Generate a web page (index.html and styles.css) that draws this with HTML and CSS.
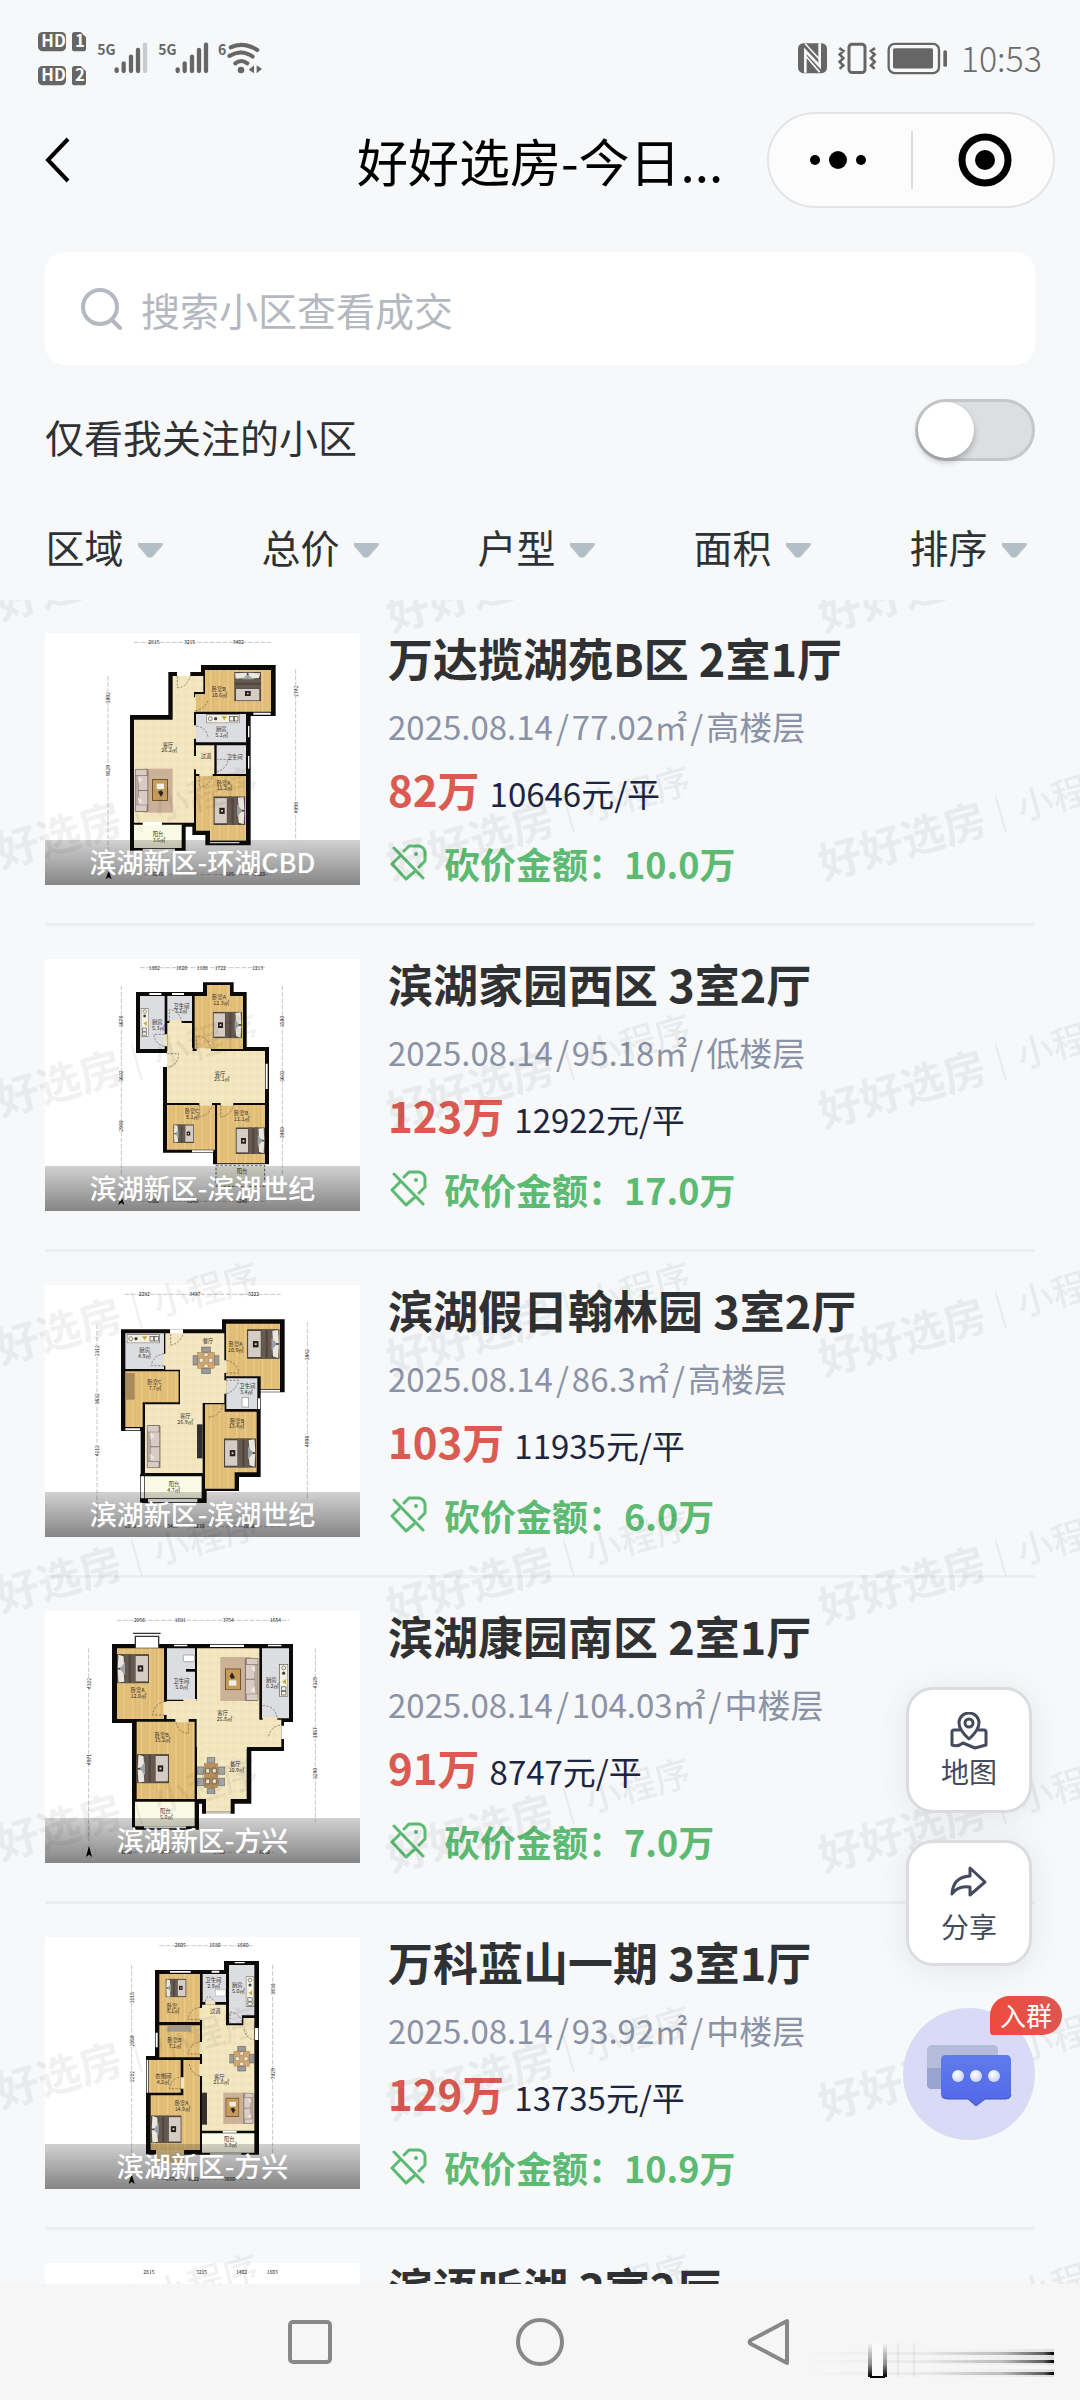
FILE: index.html
```html
<!DOCTYPE html>
<html lang="zh-CN">
<head>
<meta charset="utf-8">
<meta name="viewport" content="width=device-width, initial-scale=1">
<title>好好选房-今日成交</title>
<link rel="stylesheet" href="styles.css">
</head>
<body>
<svg class="defs" aria-hidden="true">
  <defs>
    <pattern id="wood" width="26" height="60" patternUnits="userSpaceOnUse"><rect width="26" height="60" fill="#e3c07a"/><path d="M4 0V60M16 0V60" stroke="#dab56c" stroke-width="2"/><path d="M22 0V60" stroke="#edcd8c" stroke-width="3"/></pattern>
    <pattern id="tile" width="24" height="24" patternUnits="userSpaceOnUse"><rect width="24" height="24" fill="#f4e8c3"/><path d="M12 2L22 12L12 22L2 12Z" fill="#f1e3b9"/></pattern>
    <pattern id="bath" width="12" height="12" patternUnits="userSpaceOnUse"><rect width="12" height="12" fill="#dcdee1"/><path d="M0 0H12M0 0V12" stroke="#d0d2d6"/></pattern>
    <symbol id="bed" viewBox="0 0 88 80"><rect width="88" height="80" fill="#4f463f"/><rect x="3" y="5" width="34" height="70" fill="#d5ccc3"/><path d="M38 0H50V80H38ZM56 0H68V80H56Z" fill="#665a50"/><path d="M68 4L84 2L86 38L70 36ZM68 44L86 42L84 78L70 74Z" fill="#e9e5df"/><path d="M66 22L80 40L66 58Z" fill="#9aa3a5"/><rect x="16" y="32" width="15" height="17" fill="#25201d"/><path d="M21 38H26V43H21Z" fill="#ddd"/></symbol>
    <symbol id="sofa" viewBox="0 0 42 130"><rect width="42" height="130" rx="5" fill="#87786f"/><path d="M3 3H36V20H3ZM3 110H36V127H3ZM12 22H38V64H12ZM12 67H38V108H12Z" fill="#d8ccc4"/><path d="M3 22H11V108H3Z" fill="#b9aba2"/><path d="M10 22L24 32L12 44ZM10 86L24 98L12 106Z" fill="#eee7e1"/></symbol>
    <symbol id="table" viewBox="0 0 48 66"><rect width="48" height="66" fill="#6f532f"/><rect x="3" y="3" width="42" height="60" fill="#c69a58"/><rect x="14" y="14" width="22" height="16" fill="#f4efe6"/><path d="M18 38L28 34L34 42L27 54Z" fill="#2c241e"/></symbol>
    <symbol id="dining" viewBox="0 0 80 84"><path d="M27 2H53V18H27ZM27 66H53V82H27ZM0 28H16V56H0ZM64 28H80V56H64Z" fill="#9c9a99" stroke="#666" stroke-width="2"/><rect x="15" y="18" width="50" height="48" fill="#cfa871" stroke="#7d6036"/><path d="M20 36H32V48H20ZM48 36H60V48H48ZM34 20H46V30H34ZM34 54H46V64H34Z" fill="#f3e9d7" stroke="#54452f"/></symbol>
    <symbol id="dining-long" viewBox="0 0 84 112"><path d="M31 1H53V18H31ZM31 94H53V111H31ZM0 30H20V52H0ZM64 30H84V52H64ZM0 64H20V86H0ZM64 64H84V86H64Z" fill="#a5a4a5" stroke="#666" stroke-width="2"/><rect x="22" y="20" width="40" height="72" fill="#b88f5f" stroke="#7d6036"/><path d="M26 34H38V48H26ZM46 34H58V48H46ZM26 66H38V80H26ZM46 66H58V80H46Z" fill="#f3e9d7" stroke="#54452f" stroke-width="2"/></symbol>
    <symbol id="stove" viewBox="0 0 100 28"><rect x="1" y="1" width="98" height="26" fill="#f4f1e5" stroke="#5b564d" stroke-width="2"/><circle cx="12" cy="14" r="6" fill="none" stroke="#555" stroke-width="2"/><circle cx="28" cy="14" r="5" fill="#444"/><path d="M46 7H62L54 19Z" fill="#c6a82f"/><rect x="70" y="7" width="11" height="14" fill="none" stroke="#444" stroke-width="2"/><rect x="84" y="7" width="11" height="14" fill="none" stroke="#444" stroke-width="2"/></symbol>
    <symbol id="tag" viewBox="0 0 38 38"><path d="M14 7L19 2H29Q34 3 35 8V17L29 23M10 12L2 20L16 35L24 28M4 4L33 34" fill="none" stroke="currentColor" stroke-width="3" stroke-linejoin="round" stroke-linecap="round"/><circle cx="26" cy="10" r="2" fill="currentColor"/></symbol>
  </defs>
</svg>

<div class="app">
  <header class="top">
    <div class="status">
      <svg class="status-left" viewBox="0 0 720 240" role="img" aria-label="信号">
        <g fill="#666">
          <rect x="24" y="36" width="84" height="58" rx="14"/><path d="M134 36H152L168 52V86Q168 94 160 94H134Q126 94 126 86V44Q126 36 134 36Z"/>
          <rect x="24" y="138" width="84" height="58" rx="14"/><path d="M134 138H152L168 154V188Q168 196 160 196H134Q126 196 126 188V146Q126 138 134 138Z"/>
          <g class="bars"><path d="M260 148V153M281 130V153M303 110V153M324 90V153M443 148V153M464 130V153M486 110V153M507 90V153M528 74V153"/><path d="M345 74V153" opacity=".3"/></g>
          <g fill="none" stroke="#666" stroke-width="12" stroke-linecap="round"><path d="M602 82Q640 64 682 90M598 108Q635 86 668 110M616 130Q634 116 652 130"/></g>
          <circle cx="633" cy="150" r="10"/><path d="M672 136V160L656 149ZM680 136L696 147L680 160Z"/>
        </g>
        <g class="hd"><text x="34" y="82">HD</text><text x="135" y="82">1</text><text x="34" y="184">HD</text><text x="135" y="184">2</text></g>
        <g class="net"><text x="202" y="106">5G</text><text x="385" y="106">5G</text><text x="564" y="104">6</text></g>
      </svg>
      <div class="status-right">
        <svg class="status-icons" viewBox="45 30 456 110" role="img" aria-label="NFC 振动 电池">
          <rect x="48" y="39" width="87" height="90" rx="16" fill="#666"/><path d="M70 128V62L113 108V39" fill="none" stroke="#f6f7fa" stroke-width="8"/><path d="M69 40L113 88M70 76L113 126" stroke="#f6f7fa" stroke-width="5"/>
          <g fill="none" stroke="#666"><rect x="201" y="42" width="48" height="85" rx="9" stroke-width="9"/><path d="M172 54L184 62L173 73L184 84L173 95L184 106L173 116M279 54L267 62L278 73L267 84L278 95L267 106L278 116" stroke-width="8"/><rect x="320" y="41" width="151" height="88" rx="18" stroke-width="7"/></g>
          <rect x="333" y="54" width="120" height="61" rx="5" fill="#666"/><rect x="484" y="60" width="11" height="50" rx="5" fill="#666"/>
        </svg>
        <time class="clock">10:53</time>
      </div>
    </div>
    <nav class="titlebar">
      <button class="back" aria-label="返回"><svg viewBox="0 0 26 48"><path d="M23 3L3 24L23 45" fill="none" stroke="#000" stroke-width="4"/></svg></button>
      <h1 class="page-title">好好选房-今日...</h1>
      <div class="capsule">
        <button aria-label="更多"><svg viewBox="0 0 58 54"><circle cx="6" cy="27" r="5"/><circle cx="29" cy="27" r="9"/><circle cx="52" cy="27" r="5"/></svg></button>
        <button aria-label="关闭"><svg viewBox="0 0 54 54"><circle cx="27" cy="27" r="23" fill="none" stroke="#000" stroke-width="7"/><circle cx="27" cy="27" r="10"/></svg></button>
      </div>
    </nav>
    <label class="search">
      <svg viewBox="0 0 42 42"><circle cx="19" cy="19" r="17" fill="none" stroke="#b4b8c0" stroke-width="4"/><path d="M31 32L39 40" stroke="#b4b8c0" stroke-width="4" stroke-linecap="round"/></svg>
      <input type="search" placeholder="搜索小区查看成交" aria-label="搜索小区">
    </label>
    <label class="follow"><span>仅看我关注的小区</span><input class="switch" type="checkbox" role="switch"></label>
    <div class="filters">
      <label class="filter"><select aria-label="区域"><option>区域</option></select><i></i></label>
      <label class="filter"><select aria-label="总价"><option>总价</option></select><i></i></label>
      <label class="filter"><select aria-label="户型"><option>户型</option></select><i></i></label>
      <label class="filter"><select aria-label="面积"><option>面积</option></select><i></i></label>
      <label class="filter"><select aria-label="排序"><option>排序</option></select><i></i></label>
    </div>
  </header>

  <main class="content">
    <ul class="list">
      <li class="item">
        <figure class="thumb">
          <svg class="plan" viewBox="45 39 945 756">
            <path d="M300 285H415V156H513V135H737V288H662V676H526V645H487V620H467V692H300Z" fill="#0c0a09"/>
            <path d="M428 168H520V216H492V608H312V299H428ZM498 376H553V462H498Z" fill="url(#tile)"/>
            <path d="M525 150H723V275H495V222H525ZM498 468H648V662H540V632H498Z" fill="url(#wood)"/>
            <path d="M498 282H648V367H498ZM560 376H648V462H560Z" fill="url(#bath)"/>
            <path d="M312 614H455V684H312Z" fill="#fafbe6"/>
            <path d="M441 154H481V168H441ZM670 278H722V284H670ZM654 318H658V352H654ZM654 408H658V446H654ZM540 666H628V670H540ZM338 606H396V616H338ZM338 686H435V694H338Z" fill="#fff"/>
            <path d="M491 232H498V275H491ZM491 316H498V356H491ZM491 408H498V448H491ZM508 460H548V468H508Z" fill="#f3e5bb"/>
            <use href="#bed" x="609" y="152" width="88" height="96" transform="rotate(-90 653 200)"/>
            <use href="#bed" x="549" y="529" width="98" height="86"/>
            <rect x="340" y="446" width="88" height="132" fill="#cbb198"/><use href="#sofa" x="314" y="446" width="42" height="130"/><use href="#table" x="366" y="477" width="48" height="66"/>
            <use href="#stove" x="529" y="282" width="100" height="28"/>
            <path class="door" d="M442 168V203Q472 202 481 168M495 272Q526 266 533 242M498 318Q528 322 534 350M508 468V502Q540 498 546 468M558 418H590M560 456Q590 446 594 420"/>
            <path class="dim" d="M312 67H722M234 168V740M797 148V662M340 764H722"/><path d="M236 752L245 778L236 772L227 778Z"/>
            <g class="names"><text x="398" y="380">客厅</text><text x="394" y="397">26.2㎡</text><text x="545" y="214">卧室B</text><text x="545" y="231">10.6㎡</text><text x="558" y="334">厨房</text><text x="556" y="351">5.1㎡</text><text x="512" y="414">过道</text><text x="590" y="416">卫生间</text><text x="560" y="494">卧室A</text><text x="560" y="511">11.2㎡</text><text x="368" y="648">阳台</text><text x="368" y="665">3.6㎡</text></g>
            <g class="dims"><text x="355" y="72">2815</text><text x="462" y="72">3215</text><text x="608" y="72">3402</text><text x="366" y="768">3245</text><text x="578" y="768">3195</text><text x="672" y="768">1120</text><text transform="translate(240 250) rotate(-90)">3892</text><text transform="translate(240 468) rotate(-90)">9529</text><text transform="translate(803 230) rotate(-90)">2742</text><text transform="translate(803 580) rotate(-90)">4090</text></g>
          </svg>
          <figcaption>滨湖新区-环湖CBD</figcaption>
        </figure>
        <div class="info">
          <h2>万达揽湖苑B区 2室1厅</h2>
          <p class="meta"><span>2025.08.14</span><span>/</span><span>77.02㎡</span><span>/</span><span>高楼层</span></p>
          <p class="price"><strong>82万</strong><span>10646元/平</span></p>
          <p class="cut"><svg><use href="#tag"/></svg>砍价金额：10.0万</p>
        </div>
      </li>

      <li class="item">
        <figure class="thumb">
          <svg class="plan" viewBox="45 42 945 756">
            <path d="M318 141H519V112H611V141H650V306H717V658H549V623H399V366H411V324H318Z" fill="#0c0a09"/>
            <path d="M412 234H486V318H705V474H411V318H412Z" fill="url(#tile)"/>
            <path d="M531 120H600V153H639V312H494V153H531ZM411 480H555V614H411ZM561 480H705V655H561Z" fill="url(#wood)"/>
            <path d="M330 153H404V312H330ZM412 153H486V228H412Z" fill="url(#bath)"/>
            <path d="M558 661H704V724H558Z" fill="#f2f4e5" stroke="#666" stroke-width="3" stroke-dasharray="8 5"/>
            <path d="M358 144H394V150H358ZM426 144H462V150H426ZM399 327H411V366H399ZM707 356H713V432H707ZM486 616H550V622H486Z" fill="#fff"/>
            <path d="M402 268H412V304H402ZM418 226H455V236H418ZM500 310H543V320H500ZM453 308H488V320H453ZM508 472H546V482H508ZM572 472H610V482H572Z" fill="#f3e5bb"/>
            <use href="#bed" x="548" y="200" width="88" height="80"/><use href="#bed" x="616" y="547" width="90" height="80"/><use href="#bed" x="414" y="538" width="94" height="56" transform="rotate(180 461 566)"/>
            <use href="#stove" x="300" y="220" width="88" height="24" transform="rotate(90 344 232)"/>
            <path class="door" d="M411 326H446Q444 360 415 366M404 268H372Q374 298 404 304M418 230V194Q448 196 455 230M500 312V272Q536 276 543 312M508 480V516Q540 510 546 480M572 480V516Q604 510 610 480"/>
            <path class="dim" d="M330 68H706M274 122V740M757 122V690M330 769H706"/><path d="M274 752L283 780L274 773L265 780Z"/>
            <g class="names"><text x="366" y="238">厨房</text><text x="366" y="255">5.3㎡</text><text x="430" y="188">卫生间</text><text x="434" y="205">3.2㎡</text><text x="546" y="162">卧室A</text><text x="550" y="179">12.3㎡</text><text x="554" y="392">客厅</text><text x="552" y="409">25.1㎡</text><text x="464" y="505">卧室C</text><text x="468" y="522">8.1㎡</text><text x="612" y="510">卧室B</text><text x="612" y="527">11.1㎡</text><text x="620" y="684">阳台</text></g>
            <g class="dims"><text x="356" y="74">1802</text><text x="438" y="74">1620</text><text x="500" y="74">1108</text><text x="554" y="74">1722</text><text x="666" y="74">1213</text><text x="354" y="774">1802</text><text x="470" y="774">3240</text><text x="618" y="774">3240</text><text transform="translate(280 246) rotate(-90)">3678</text><text transform="translate(280 410) rotate(-90)">3602</text><text transform="translate(280 560) rotate(-90)">2980</text><text transform="translate(763 246) rotate(-90)">3580</text><text transform="translate(763 410) rotate(-90)">3602</text><text transform="translate(763 580) rotate(-90)">3980</text></g>
          </svg>
          <figcaption>滨湖新区-滨湖世纪</figcaption>
        </figure>
        <div class="info">
          <h2>滨湖家园西区 3室2厅</h2>
          <p class="meta"><span>2025.08.14</span><span>/</span><span>95.18㎡</span><span>/</span><span>低楼层</span></p>
          <p class="price"><strong>123万</strong><span>12922元/平</span></p>
          <p class="cut"><svg><use href="#tag"/></svg>砍价金额：17.0万</p>
        </div>
      </li>

      <li class="item">
        <figure class="thumb">
          <svg class="plan" viewBox="45 44 945 756">
            <path d="M273 177H576V147H764V366H692V620H627V662H530V698H330V612H332V482H273Z" fill="#0c0a09"/>
            <path d="M406 189H583V398H518V608H345V402H450V298H406Z" fill="url(#tile)"/>
            <path d="M588 160H750V356H692V318H588ZM286 303H446V396H338V470H286ZM525 402H584V424H680V606H614V655H525Z" fill="url(#wood)"/>
            <path d="M286 189H402V296H286ZM589 324H682V416H589Z" fill="url(#bath)"/>
            <path d="M345 618H515V684H345Z" fill="#fafbe6"/>
            <path d="M420 177H459V190H420ZM684 384H690V416H684ZM286 474H330V480H286ZM692 358H750V364H692ZM354 686H502V696H354ZM332 618H343V684H332Z" fill="#fff"/>
            <path d="M400 250H408V286H400ZM581 270H590V308H581ZM581 330H590V370H581Z" fill="#f3e5bb"/>
            <use href="#bed" x="651" y="176" width="98" height="90"/><use href="#bed" x="582" y="503" width="96" height="90"/>
            <use href="#dining" x="488" y="228" width="80" height="84"/><use href="#sofa" x="350" y="464" width="42" height="130"/><rect x="501" y="462" width="17" height="102" fill="#35302d"/>
            <use href="#stove" x="290" y="191" width="100" height="28"/><rect x="288" y="308" width="26" height="80" fill="#a98a5a"/><rect x="636" y="382" width="20" height="28" fill="#fff" stroke="#888" stroke-width="2"/>
            <path class="door" d="M422 190V224Q452 220 459 190M402 286H364Q368 256 402 250M588 308H626Q622 276 588 270M589 370Q618 362 626 330H589M536 440Q568 440 578 404"/>
            <path class="dim" d="M284 72H752M201 162V770M832 156V690M284 769H752"/>
            <g class="names"><text x="328" y="245">厨房</text><text x="324" y="262">4.9㎡</text><text x="518" y="218">餐厅</text><text x="596" y="227">卧室A</text><text x="594" y="244">10.9㎡</text><text x="352" y="341">卧室C</text><text x="356" y="358">7.7㎡</text><text x="628" y="353">卫生间</text><text x="630" y="370">3.4㎡</text><text x="450" y="443">客厅</text><text x="442" y="460">26.9㎡</text><text x="600" y="457">卧室B</text><text x="596" y="474">13.4㎡</text><text x="416" y="648">阳台</text><text x="412" y="665">4.7㎡</text></g>
            <g class="dims"><text x="326" y="78">2292</text><text x="478" y="78">3487</text><text x="654" y="78">3222</text><text x="284" y="774">1140</text><text x="412" y="774">3487</text><text x="490" y="774">1210</text><text x="640" y="774">1940</text><text transform="translate(207 258) rotate(-90)">2312</text><text transform="translate(207 402) rotate(-90)">3632</text><text transform="translate(207 558) rotate(-90)">4212</text><text transform="translate(838 270) rotate(-90)">3842</text><text transform="translate(838 530) rotate(-90)">4998</text></g>
          </svg>
          <figcaption>滨湖新区-滨湖世纪</figcaption>
        </figure>
        <div class="info">
          <h2>滨湖假日翰林园 3室2厅</h2>
          <p class="meta"><span>2025.08.14</span><span>/</span><span>86.3㎡</span><span>/</span><span>高楼层</span></p>
          <p class="price"><strong>103万</strong><span>11935元/平</span></p>
          <p class="cut"><svg><use href="#tag"/></svg>砍价金额：6.0万</p>
        </div>
      </li>

      <li class="item">
        <figure class="thumb">
          <svg class="plan" viewBox="45 48 945 756">
            <path d="M246 147H789V381H762V468H664V626H614V656H516V626H507V704H306V384H246Z" fill="#0c0a09"/>
            <path d="M501 160H688V374H754V456H650V612H602V650H528V612H501V456H500V372H410V318H501Z" fill="url(#tile)"/>
            <path d="M261 160H402V372H261ZM320 380H494V612H320Z" fill="url(#wood)"/>
            <path d="M411 160H495V314H411ZM696 160H777V370H696Z" fill="url(#bath)"/>
            <path d="M315 620H494V694H315Z" fill="#fafbe6"/>
            <path d="M432 149H472V154H432ZM540 149H642V156H540ZM714 149H754V154H714ZM754 392H762V432H754ZM342 694H468V700H342ZM528 652H602V656H528Z" fill="#fff"/>
            <path d="M316 158V124H386V158M309 115H392" fill="#fff" stroke="#333" stroke-width="4"/>
            <path d="M468 222H496V230H468Z"/><path d="M400 320H412V360H400ZM436 370H476V382H436ZM698 366H742V378H698ZM518 452H650V462H518ZM460 312H500V318H460Z" fill="#f3e5bb"/>
            <use href="#bed" x="261" y="176" width="96" height="90" transform="rotate(180 309 221)"/><use href="#bed" x="321" y="476" width="96" height="90" transform="rotate(180 369 521)"/>
            <rect x="571" y="186" width="90" height="132" fill="#cbb198"/><use href="#sofa" x="644" y="188" width="42" height="130" transform="rotate(180 665 253)"/><use href="#table" x="585" y="220" width="48" height="66" transform="rotate(180 609 253)"/>
            <use href="#dining-long" x="501" y="486" width="84" height="112"/><use href="#stove" x="712" y="242" width="98" height="28" transform="rotate(90 761 256)"/><rect x="460" y="180" width="34" height="20" rx="4" fill="#fff" stroke="#888" stroke-width="2"/>
            <path class="door" d="M404 360H368Q372 326 404 320M438 382Q444 412 476 416V382M698 332Q736 332 742 370M716 424Q722 394 752 390"/>
            <path class="dim" d="M260 76H778M176 160V740M856 160V680M270 772H730"/><circle cx="177" cy="770" r="20" fill="none" stroke="#888" stroke-dasharray="3 4"/><path d="M177 752L186 786L177 779L168 786Z"/>
            <g class="names"><text x="302" y="291">卧室A</text><text x="302" y="308">12.0㎡</text><text x="430" y="265">卫生间</text><text x="436" y="282">5.0㎡</text><text x="562" y="361">客厅</text><text x="560" y="378">25.8㎡</text><text x="708" y="262">厨房</text><text x="708" y="279">6.2㎡</text><text x="374" y="425">卧室B</text><text x="374" y="442">15.2㎡</text><text x="600" y="513">餐厅</text><text x="596" y="530">10.9㎡</text><text x="390" y="654">阳台</text><text x="390" y="671">5.0㎡</text></g>
            <g class="dims"><text x="312" y="82">2956</text><text x="434" y="82">1691</text><text x="578" y="82">3754</text><text x="720" y="82">1654</text><text x="272" y="777">1230</text><text x="390" y="777">3477</text><text x="550" y="777">1460</text><text x="686" y="777">1952</text><text transform="translate(182 282) rotate(-90)">4322</text><text transform="translate(182 510) rotate(-90)">4971</text><text transform="translate(862 280) rotate(-90)">4329</text><text transform="translate(862 430) rotate(-90)">1857</text><text transform="translate(862 552) rotate(-90)">3290</text></g>
          </svg>
          <figcaption>滨湖新区-方兴</figcaption>
        </figure>
        <div class="info">
          <h2>滨湖康园南区 2室1厅</h2>
          <p class="meta"><span>2025.08.14</span><span>/</span><span>104.03㎡</span><span>/</span><span>中楼层</span></p>
          <p class="price"><strong>91万</strong><span>8747元/平</span></p>
          <p class="cut"><svg><use href="#tag"/></svg>砍价金额：7.0万</p>
        </div>
      </li>

      <li class="item">
        <figure class="thumb">
          <svg class="plan" viewBox="45 51 945 756">
            <path d="M375 150H582V123H687V704H348V408H375Z" fill="#0c0a09"/>
            <path d="M516 254H588V316H640V294H673V632H516Z" fill="url(#tile)"/>
            <path d="M388 162H510V306H388ZM388 316H510V412H388ZM357 420H452V518H357ZM460 420H510V690H362V526H460Z" fill="url(#wood)"/>
            <path d="M518 162H588V246H518ZM597 135H673V286H636V310H597Z" fill="url(#bath)"/>
            <path d="M516 640H673V698H516Z" fill="#fafbe6"/><path d="M378 690H462V728H378Z" fill="#e8cd92"/>
            <path d="M420 153H482V158H420ZM545 152H568V158H545ZM614 126H644V130H614ZM377 338H383V382H377ZM675 324H685V360H675ZM350 420H355V518H350ZM540 700H634V704H540ZM578 632H620V638H578Z" fill="#fff"/>
            <path d="M508 264H518V300H508ZM508 366H518V402H508ZM508 432H518V468H508ZM452 472H462V506H452ZM526 244H556V254H526Z" fill="#f3e5bb"/>
            <use href="#bed" x="390" y="176" width="96" height="56" transform="rotate(180 438 204)"/><use href="#bed" x="363" y="586" width="92" height="84" transform="rotate(180 409 628)"/>
            <use href="#dining" x="598" y="376" width="74" height="80"/><rect x="580" y="518" width="76" height="94" fill="#cbb198"/><use href="#sofa" x="637" y="518" width="36" height="94" transform="rotate(180 655 565)"/><use href="#table" x="586" y="532" width="42" height="60"/>
            <rect x="516" y="518" width="15" height="96" fill="#35302d"/><rect x="412" y="317" width="72" height="18" fill="#a19988"/><use href="#stove" x="614" y="202" width="92" height="26" transform="rotate(90 660 215)"/><rect x="556" y="210" width="30" height="18" fill="#fff" stroke="#888"/>
            <path class="door" d="M512 298H474Q478 266 510 262M510 402H474Q480 370 510 366M510 468Q482 462 478 432M454 506H418Q422 476 454 470M526 246Q530 214 556 246M600 310V276Q630 280 636 308M676 360Q648 358 642 326"/>
            <path class="dim" d="M388 77H674M305 134V740M728 134V720M378 778H674"/><path d="M305 762L314 792L305 785L296 792Z"/>
            <g class="names"><text x="410" y="263">卧室</text><text x="410" y="280">8.1㎡</text><text x="526" y="187">卫生间</text><text x="532" y="204">2.9㎡</text><text x="606" y="202">厨房</text><text x="606" y="219">5.0㎡</text><text x="540" y="278">过道</text><text x="412" y="366">卧室B</text><text x="416" y="383">7.1㎡</text><text x="376" y="475">衣帽间</text><text x="380" y="492">4.2㎡</text><text x="552" y="476">客厅</text><text x="550" y="493">21.6㎡</text><text x="434" y="555">卧室A</text><text x="434" y="572">14.9㎡</text><text x="582" y="664">阳台</text><text x="582" y="681">3.3㎡</text></g>
            <g class="dims"><text x="434" y="82">2605</text><text x="538" y="82">1580</text><text x="622" y="82">1660</text><text x="408" y="782">1770</text><text x="474" y="782">1022</text><text x="582" y="782">3080</text><text transform="translate(311 250) rotate(-90)">3115</text><text transform="translate(311 380) rotate(-90)">2050</text><text transform="translate(311 486) rotate(-90)">2212</text><text transform="translate(734 224) rotate(-90)">3830</text><text transform="translate(734 478) rotate(-90)">7029</text></g>
          </svg>
          <figcaption>滨湖新区-方兴</figcaption>
        </figure>
        <div class="info">
          <h2>万科蓝山一期 3室1厅</h2>
          <p class="meta"><span>2025.08.14</span><span>/</span><span>93.92㎡</span><span>/</span><span>中楼层</span></p>
          <p class="price"><strong>129万</strong><span>13735元/平</span></p>
          <p class="cut"><svg><use href="#tag"/></svg>砍价金额：10.9万</p>
        </div>
      </li>

      <li class="item">
        <figure class="thumb">
          <svg class="plan" viewBox="45 61 945 756"><g class="dims"><text x="340" y="94">2815</text><text x="498" y="94">3215</text><text x="618" y="94">1402</text><text x="710" y="94">1803</text></g></svg>
        </figure>
        <div class="info"><h2>滨语听湖 3室2厅</h2></div>
      </li>
    </ul>

    <svg class="watermark" aria-hidden="true">
      <defs>
        <pattern id="wm" x="370" y="88" width="432" height="248" patternUnits="userSpaceOnUse">
          <g transform="translate(22 192) rotate(-16)"><text class="wm-brand" x="0" y="0">好好选房</text><path d="M188 -34V4" stroke="#000" stroke-width="2"/><text class="wm-sub" x="206" y="-2">小程序</text></g>
        </pattern>
      </defs>
      <rect width="100%" height="100%" fill="url(#wm)"/>
    </svg>

    <aside class="floats">
      <button class="float map"><svg viewBox="0 0 38 38"><g fill="none" stroke="#434b5c" stroke-width="3" stroke-linejoin="round" stroke-linecap="round"><path d="M19 27Q9 18 9 11A10 10 0 0 1 29 11Q29 18 19 27Z"/><circle cx="19" cy="11" r="4"/><path d="M9 18H4Q2 18 2 20V33Q8 35 13 31L25 36L36 33V20Q36 18 34 18H29"/></g></svg>地图</button>
      <button class="float"><svg viewBox="0 0 38 38"><path d="M20 5L35 19L20 32V24Q8 22 2 31Q3 14 20 13Z" fill="none" stroke="#434b5c" stroke-width="3" stroke-linejoin="round"/></svg>分享</button>
      <button class="chat">
        <svg viewBox="0 0 132 132" aria-hidden="true">
          <defs><linearGradient id="cb" x1="0" y1="0" x2="0" y2="1"><stop offset="0" stop-color="#5f7bea"/><stop offset="1" stop-color="#5368ea"/></linearGradient><radialGradient id="cd" cx=".4" cy=".35" r=".7"><stop offset="0" stop-color="#fff"/><stop offset="1" stop-color="#c9cff0"/></radialGradient></defs>
          <rect x="24" y="37" width="71" height="44" rx="5" fill="#b4bcd9"/><path d="M24 60H38V81H28Q24 81 24 76Z" fill="#98a3cf"/>
          <path d="M43 47H103Q108 47 108 52V86Q108 91 103 91H82L73 98L65 91H43Q38 91 38 86V52Q38 47 43 47Z" fill="url(#cb)"/><path d="M40 89Q42 91 45 91H65L73 98L82 91H103Q107 91 108 87" fill="none" stroke="#3f50c8"/>
          <circle cx="55" cy="68" r="6" fill="url(#cd)"/><circle cx="73" cy="68" r="6" fill="url(#cd)"/><circle cx="91" cy="68" r="6" fill="url(#cd)"/>
        </svg>
        <span class="badge">入群</span>
      </button>
    </aside>
  </main>

  <footer class="sysnav">
    <button aria-label="最近任务"><svg viewBox="0 0 48 48"><rect x="4" y="4" width="40" height="40" rx="3"/></svg></button>
    <button aria-label="主页"><svg viewBox="0 0 48 48"><circle cx="24" cy="24" r="22"/></svg></button>
    <button aria-label="返回上一级"><svg viewBox="0 0 48 48"><path d="M41 3V45L5 26Q2 24 5 22Z"/></svg></button>
    <svg class="smear" viewBox="0 0 256 40" aria-hidden="true">
      <defs><linearGradient id="sh"><stop offset="0" stop-color="#000" stop-opacity="0"/><stop offset=".5" stop-color="#000" stop-opacity=".05"/><stop offset=".8" stop-color="#000" stop-opacity=".22"/><stop offset=".96" stop-color="#000" stop-opacity=".6"/><stop offset="1" stop-color="#000"/></linearGradient><linearGradient id="sv" x1="0" y1="0" x2="0" y2="1"><stop offset="0" stop-color="#000" stop-opacity="0"/><stop offset=".6" stop-color="#000" stop-opacity=".4"/><stop offset="1" stop-color="#000"/></linearGradient></defs>
      <rect x="0" y="10" width="254" height="8" fill="url(#sh)" opacity=".12"/><rect x="0" y="18" width="254" height="8" fill="url(#sh)" opacity=".12"/><rect x="0" y="30" width="254" height="8" fill="url(#sh)" opacity=".12"/>
      <rect x="0" y="13" width="254" height="3" fill="url(#sh)"/><rect x="0" y="21" width="254" height="3" fill="url(#sh)"/><rect x="0" y="33" width="254" height="3" fill="url(#sh)"/>
      <rect x="68" y="4" width="4" height="34" fill="url(#sv)"/><rect x="83" y="4" width="4" height="34" fill="url(#sv)"/><rect x="72" y="4" width="11" height="33" fill="#fafafa"/><path d="M70 38H85" stroke="#000" stroke-width="2"/>
      <path d="M98 4V38M114 4V38" stroke="#000" stroke-opacity=".05" stroke-width="2"/>
    </svg>
  </footer>
</div>
</body>
</html>
```
FILE: styles.css
```css
* { box-sizing: border-box; margin: 0; padding: 0; }
body { background: #f7f8fa; color: #2f3133; font-family: "Noto Sans CJK SC", "Noto Sans", sans-serif; }
button, input, select { font: inherit; color: inherit; border: 0; background: none; outline: none; }
svg { display: block; flex: none; }
.defs { position: absolute; width: 0; height: 0; }

.app { display: flex; flex-direction: column; height: 100vh; overflow: hidden; }
.top { flex: none; height: 600px; }

/* system status bar */
.status { display: flex; justify-content: space-between; align-items: flex-start; height: 112px; padding: 20px 38px 0 30px; }
.status-left { width: 240px; height: 80px; }
.bars { fill: none; stroke: #666; stroke-width: 13px; stroke-linecap: round; }
.hd { fill: #fff; font-size: 50px; font-weight: 700; font-family: "Liberation Sans Narrow", "Noto Sans CJK SC", sans-serif; }
.net { fill: #666; font-size: 42px; font-weight: 700; font-family: "Liberation Sans Narrow", "Noto Sans CJK SC", sans-serif; }
.status-right { display: flex; align-items: center; gap: 12px; height: 76px; }
.status-icons { width: 152px; height: 37px; }
.clock { font-size: 34px; line-height: 40px; color: #6c6c6c; font-weight: 300; }

/* title bar */
.titlebar { display: grid; grid-template-columns: 288px 1fr 288px; align-items: center; height: 96px; padding: 0 25px; }
.back { width: 66px; height: 66px; padding: 9px 20px; }
.back svg { width: 26px; height: 48px; }
.page-title { font-size: 51px; font-weight: 400; line-height: 60px; color: #000; text-align: center; white-space: nowrap; }
.capsule { display: grid; grid-template-columns: 1fr 1fr; align-items: center; height: 96px; border: 2px solid #e3e4e6; border-radius: 48px; background: #fcfcfc; }
.capsule button { display: flex; justify-content: center; align-items: center; height: 58px; padding-right: 4px; }
.capsule button + button { padding: 0 0 0 4px; border-left: 2px solid #dcdcdc; }
.capsule svg { width: 58px; height: 54px; }

.search { display: flex; align-items: center; gap: 18px; height: 113px; margin: 44px 45px 0; padding: 0 36px; border-radius: 20px; background: #fff; }
.search svg { width: 42px; height: 42px; }
.search input { flex: 1; min-width: 0; font-size: 39px; line-height: 56px; appearance: none; }
.search input::placeholder { color: #b4b8c0; opacity: 1; }

.follow { display: flex; justify-content: space-between; align-items: center; height: 62px; margin: 34px 45px 0; font-size: 39px; line-height: 56px; }
.follow span { padding-top: 12px; }
.switch { position: relative; width: 120px; height: 62px; border: 3px solid #c6c7c9; border-radius: 31px; background: #dddee2; appearance: none; }
.switch::before { content: ""; display: block; width: 56px; height: 56px; border-radius: 50%; background: #fff; box-shadow: 0 4px 6px rgba(0, 0, 0, .25); }
.switch:checked { background: #5bb873; }
.switch:checked::before { margin-left: auto; }

.filters { display: grid; grid-template-columns: repeat(5, 1fr); margin-top: 57px; }
.filter { display: flex; justify-content: center; align-items: center; gap: 14px; padding-right: 8px; }
.filter select { width: 78px; font-size: 39px; line-height: 56px; appearance: none; }
.filter i { width: 25px; height: 15px; margin-top: 8px; background: #b3bfc7; clip-path: polygon(0 0, 100% 0, 100% 20%, 58% 100%, 42% 100%, 0 20%); }

/* listing */
.content { position: relative; flex: 1; min-height: 0; }
.list { height: 100%; padding: 0 45px; overflow: hidden auto; list-style: none; scrollbar-width: none; }
.item { display: flex; gap: 28px; padding: 33px 0 38px; border-bottom: 3px solid #eceef1; }
.thumb { position: relative; flex: none; width: 315px; height: 252px; background: #fff; }
.plan { width: 100%; height: 100%; }
.thumb figcaption { position: absolute; left: 0; right: 0; bottom: 0; height: 45px; font-size: 27px; line-height: 44px; text-align: center; color: #fff; font-weight: 500; background: linear-gradient(rgba(0, 0, 0, .18), rgba(0, 0, 0, .48)); }
.door { fill: none; stroke: #6b6252; stroke-width: 2px; stroke-dasharray: 7 4; }
.dim { fill: none; stroke: #aaa; stroke-width: 2px; stroke-dasharray: 14 5; }
.names { font-size: 16px; fill: #33302a; }
.dims { font-size: 15px; fill: #222; }

.info { flex: 1; min-width: 0; white-space: nowrap; }
.info h2 { font-size: 45px; line-height: 50px; font-weight: 700; color: #303132; }
.meta { display: flex; gap: 3px; margin-top: 19px; font-size: 33px; line-height: 48px; color: #8a93a6; }
.price { display: flex; align-items: baseline; gap: 10px; height: 48px; margin-top: 15px; line-height: 48px; }
.price strong { font-size: 42px; color: #da5b52; }
.price span { font-size: 33px; color: #1c2640; }
.cut { display: flex; align-items: center; height: 42px; margin-top: 29px; font-size: 36px; line-height: 42px; font-weight: 700; color: #5cba72; }
.cut svg { width: 38px; height: 38px; margin: 0 16px 0 2px; }

.watermark { position: absolute; left: 0; top: 0; width: 100%; height: 100%; opacity: .05; pointer-events: none; }
.wm-brand { font-size: 43px; font-weight: 700; }
.wm-sub { font-size: 36px; font-weight: 500; }

/* floating actions */
.floats { position: absolute; right: 45px; bottom: 144px; display: flex; flex-direction: column; align-items: center; }
.float { display: flex; flex-direction: column; align-items: center; gap: 4px; width: 126px; height: 126px; margin-bottom: 27px; padding-top: 20px; border: 3px solid #dbdce0; border-radius: 27px; background: #fff; font-size: 28px; line-height: 42px; color: #434b5c; box-shadow: 0 4px 30px rgba(60, 70, 90, .1); }
.float.map { gap: 0; padding-top: 22px; }
.float svg { width: 38px; height: 38px; }
.chat { position: relative; width: 132px; height: 132px; margin-top: 15px; border-radius: 50%; background: #d9dbf6; }
.badge { position: absolute; left: 87px; top: -12px; width: 72px; height: 39px; border-radius: 20px 20px 20px 3px; background: linear-gradient(100deg, #ef4a3c, #dc5752); font-size: 26px; line-height: 38px; text-align: center; color: #fff; }

/* system navigation */
.sysnav { position: relative; flex: none; display: flex; justify-content: center; align-items: center; gap: 182px; height: 116px; background: #f6f6f6; }
.sysnav button svg { width: 48px; height: 48px; fill: none; stroke: #888; stroke-width: 4px; stroke-linejoin: round; }
.smear { position: absolute; right: 24px; bottom: 21px; width: 256px; height: 40px; }
```
